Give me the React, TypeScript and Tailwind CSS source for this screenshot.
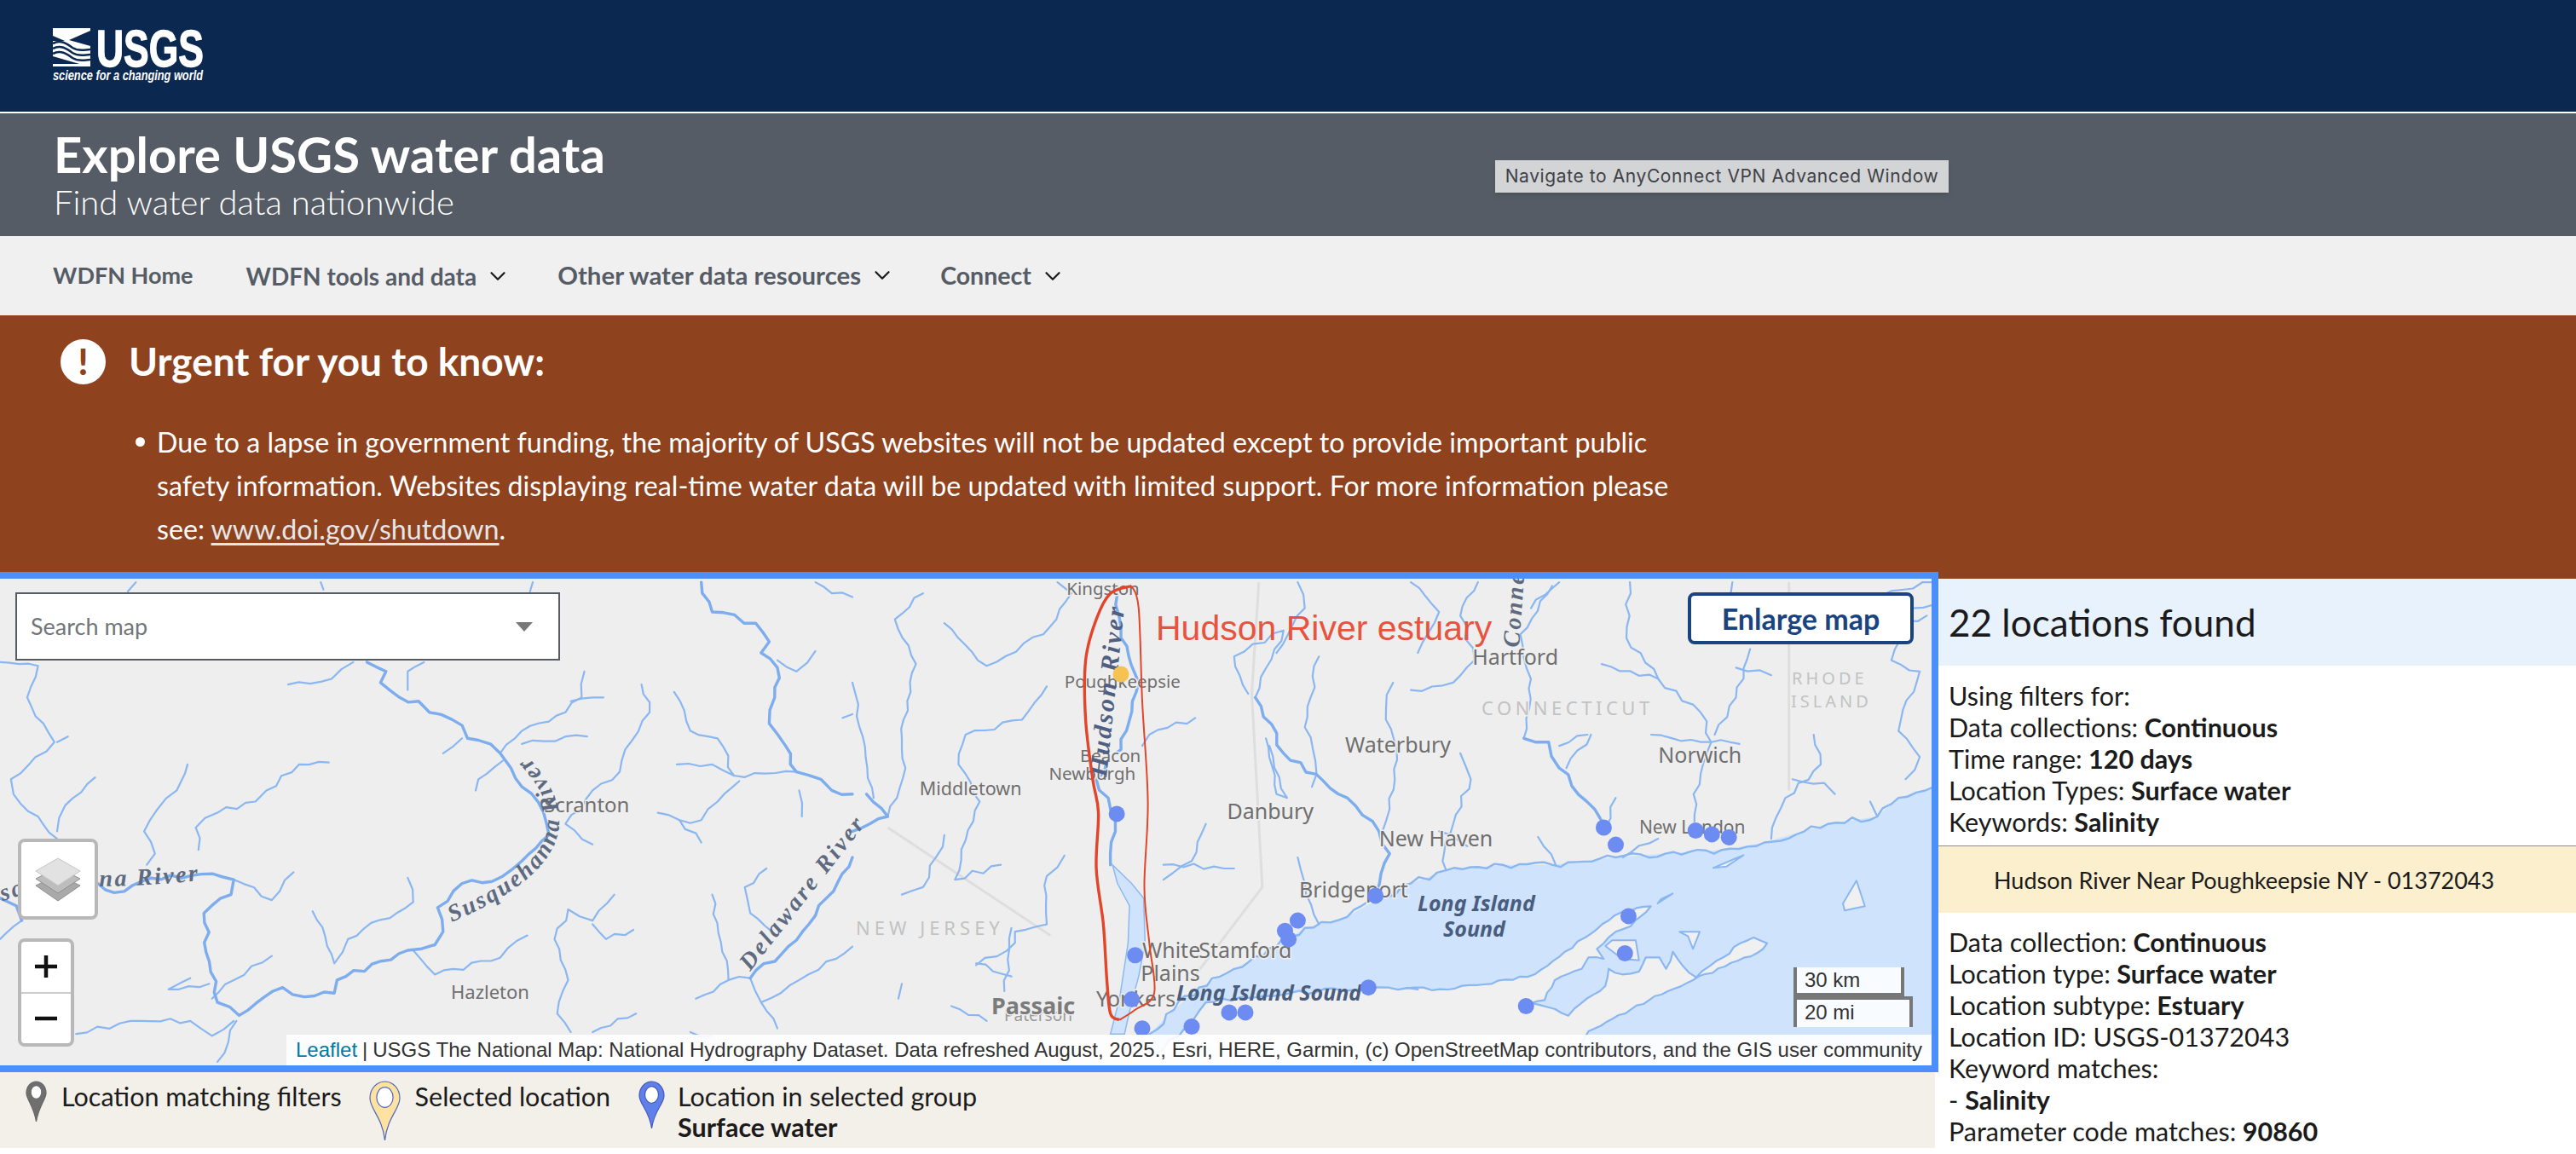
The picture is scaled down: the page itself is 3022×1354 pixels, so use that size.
/**
 * USGS water data explorer, map page with the results side panel.
 * Map geometry is traced from crops, so points are kept in crop coordinates
 * and converted to map pixels by L(), R() and S().
 */
import { ChevronDown } from 'lucide-react';

type Pt = [number, number];

/** Left crop to map pixels. */
const L = ([x, y]: Pt): Pt => [x / 1.568, 670 + y / 2.292];
/** Right crop to map pixels. */
const R = ([x, y]: Pt): Pt => [1000 + x / 1.206, 670 + y / 2.292];
/** Long Island crop to map pixels. */
const S = ([x, y]: Pt): Pt => [1650 + x / 2.529, 1000 + y / 3];

const flat = (n: number[]): Pt[] => {
  const out: Pt[] = [];
  for (let i = 0; i < n.length; i += 2) out.push([n[i], n[i + 1]]);
  return out;
};

const rnd = (i: number) => {
  const v = Math.sin(i * 127.1 + 11.7) * 43758.5453;
  return v - Math.floor(v);
};

/** Turns a few control points into a wiggly river line. */
const wiggle = (pts: Pt[], seed: number, amp = 7, step = 11) => {
  let d = `M${pts[0][0].toFixed(1)} ${pts[0][1].toFixed(1)}`;
  let k = seed * 37;
  for (let i = 1; i < pts.length; i++) {
    const [x0, y0] = pts[i - 1];
    const [x1, y1] = pts[i];
    const len = Math.hypot(x1 - x0, y1 - y0);
    const n = Math.max(1, Math.floor(len / step));
    for (let j = 1; j <= n; j++) {
      const t = j / n;
      const off = j === n ? 0 : (rnd(k++) - 0.5) * amp;
      const x = x0 + (x1 - x0) * t + (-(y1 - y0) / (len || 1)) * off;
      const y = y0 + (y1 - y0) * t + ((x1 - x0) / (len || 1)) * off;
      d += `L${x.toFixed(1)} ${y.toFixed(1)}`;
    }
  }
  return d;
};

const poly = (pts: Pt[]) => pts.map(p => `${p[0].toFixed(1)},${p[1].toFixed(1)}`).join(' ');

const LEFT_THICK = [
  [675,245,710,270,700,300,735,340,770,350,790,380,850,415,860,450,880,455,920,490,940,530,960,580,1000,650,1010,710,960,780,905,835,850,840,805,905,815,970,800,1005,750,1020,620,1100,615,1135,560,1145,520,1120,440,1195,400,1160,385,1050,375,920,425,870,430,830,370,815,260,835,210,865,180,840],
  [1290,30,1310,110,1390,140,1415,190,1400,220,1430,260,1425,340,1415,410,1445,470,1465,540,1510,560,1530,590,1568,600],
  [1380,1095,1450,1010,1520,880,1568,770],
  [0,880,30,900,40,940],
];

const LEFT_THIN = [
  [0,245,70,255,50,340,65,390,100,460,65,500,20,560,25,600,70,660,105,720],
  [175,555,120,630,105,700],
  [105,460,125,445],
  [345,520,325,590,290,640,265,700,285,760,270,790],
  [605,515,550,520,490,590,470,620,400,650,360,690,365,750],
  [435,1210,400,1320],
  [1180,305,1195,380,1150,480,1140,540,1090,590,1040,680,1090,735],
  [920,490,960,430,1040,380,1070,340,1075,270],
  [1050,350,1110,340],
  [960,465,1040,445,1080,445],
  [850,450,815,490],
  [925,510,880,560,875,590],
  [530,305,610,290,650,245],
  [750,320,750,270,780,245],
  [1465,540,1350,550,1310,520,1245,520],
  [1240,325,1270,430,1320,450,1350,550],
  [1430,240,1465,270,1500,215],
  [1360,565,1320,620,1290,670,1250,670,1210,650],
  [1250,670,1290,730],
  [1380,1095,1400,1160,1430,1230],
  [1380,1095,1340,1100,1310,870],
  [1340,1100,1280,1150],
  [1410,800,1370,850,1380,920,1420,970],
  [1400,1160,1470,1100,1520,1050,1568,1010],
  [1130,870,1090,940,1045,910,1020,990,1045,1100,1025,1190,1050,1240],
  [1090,950,1115,990,1165,965],
  [970,980,920,1040,800,1085,760,1020],
  [750,825,760,890,640,990,615,1055,575,915],
  [540,810,500,885,430,830],
  [500,1035,430,1100,390,1150],
  [350,1095,310,1125,385,1110],
  [1170,1190,1090,1240],
  [140,1245,240,1210,350,1210,390,1250,430,1210],
  [40,940,0,990],
  [250,30,235,55],
  [590,30,595,50],
  [980,30,975,55],
  [1500,30,1530,60,1568,70],
  [1568,385,1550,395],
  [1470,590,1475,660],
  [1310,1250,1270,1240],
];

const RIGHT_THICK = [
  [0,700,50,660,20,600],
  [375,60,380,180,405,300,380,480,345,560,365,640,372,700,365,790],
  [570,340,610,490,700,610,745,700,760,760,740,870],
  [950,450,985,460,1000,530,1050,640,1065,690],
];

const RIGHT_THIN = [
  [100,60,60,130,90,250,70,450,75,530,50,660],
  [130,140,190,255,270,170,310,60,290,30],
  [275,310,240,400,160,440,150,520,180,620,145,830,210,790],
  [0,300,10,420,30,610],
  [130,710,100,850,70,870],
  [485,395,420,440,410,470],
  [500,680,480,780,440,830],
  [440,790,540,800],
  [300,765,275,820,275,950,230,970,230,1000,175,1060],
  [570,340,610,160,540,230,560,330],
  [660,230,640,420,655,510,650,580],
  [765,300,755,370,770,480,760,640,750,700],
  [585,450,600,600,615,610,590,470],
  [860,490,875,560,850,680,835,780,840,805],
  [630,770,640,840,660,950],
  [990,40,945,170,960,290,950,450],
  [1045,440,1010,530],
  [1065,690,1080,610],
  [1100,30,1095,180,1140,290,1200,380,1215,460,1190,600,1195,710],
  [1060,250,1140,290],
  [1270,210,1250,340,1220,440],
  [1130,440,1215,460,1255,465],
  [790,320,850,300,880,240,860,120,885,30],
  [1360,440,1370,520,1320,610,1300,720],
  [1440,70,1530,30],
  [1530,90,1500,100,1470,240,1510,270,1480,430,1510,500,1490,560],
  [970,715,995,790],
  [1140,720,1090,770],
  [225,960,215,1130],
  [175,1055,225,1090],
  [70,1110,65,1150],
  [140,1170,190,1210],
  [630,30,640,100,600,220],
  [790,30,830,110,800,220],
  [1250,260,1300,280],
  [1330,560,1375,570,1390,600],
  [1440,620,1450,660],
  [1480,150,1520,120],
  [1040,440,1000,470],
  [830,700,870,740],
  [1000,30,960,100],
  [1245,30,1250,120],
];

const SEA = flat([1530,580,1480,610,1450,660,1380,680,1290,730,1230,750,1150,760,1080,770,990,790,920,790,840,805,790,840,745,880,700,930,640,960,600,1010,540,1070,490,1120,455,1180,420,1245,420,1300,1530,1300]);
const COAST = flat([1530,580,1480,610,1450,660,1380,680,1290,730,1230,750,1150,760,1080,770,990,790,920,790,840,805,790,840,745,880,700,930,640,960,600,1010,540,1070,490,1120,455,1180,420,1245]);
const LONG_ISLAND_WEST = flat([430,1300,470,1230,500,1160,620,1135,730,1120,800,1125]);
const LONG_ISLAND = flat([0,478,100,482,230,465,380,430,470,350,530,300,600,240,640,210,725,190,665,260,620,280,565,340,585,375,540,370,520,410,440,450,410,520,370,530,420,545,480,575,520,530,590,470,600,410,640,430,690,420,710,370,750,370,770,410,790,350,820,400,860,440,900,400,940,370,990,320,1030,300,1070,320,1040,355,850,450,720,520,540,630,500,700]);
const ISLANDS = [
  flat([610,310,680,310,690,380,640,375,590,330]),
  flat([810,280,870,280,850,340,835,295]),
  flat([1335,100,1360,190,1300,205,1295,180]),
  flat([745,180,790,145,755,165]),
  flat([910,55,1000,10,950,50]),
];
const HUDSON = flat([368,790,395,840,412,880,414,1000,405,1090,395,1160,385,1245,365,1245,378,1150,390,1000,392,900,375,840]);

const BLUE_DOTS = flat([374,653,400,1033,395,1152,410,1230,480,1225,533,1187,556,1187,730,1120,953,1170,1098,928,1093,1028,1063,690,1080,736,1193,698,1216,708,1240,716,740,873,630,940,612,968,617,990]);

const RED_LEFT = flat([395,40,365,60,345,130,330,240,330,400,340,560,348,650,345,800,355,950,360,1100,365,1190,378,1207]);
const RED_RIGHT = flat([378,1207,400,1180,427,1135,420,1000,413,850,418,620,410,350,405,100,395,40]);

const smooth = (pts: Pt[]) => {
  let d = `M${pts[0][0].toFixed(1)} ${pts[0][1].toFixed(1)}`;
  for (let i = 0; i < pts.length - 1; i++) {
    const p0 = pts[Math.max(0, i - 1)];
    const p1 = pts[i];
    const p2 = pts[i + 1];
    const p3 = pts[Math.min(pts.length - 1, i + 2)];
    d += `C${(p1[0] + (p2[0] - p0[0]) / 6).toFixed(1)} ${(p1[1] + (p2[1] - p0[1]) / 6).toFixed(1)} ${(p2[0] - (p3[0] - p1[0]) / 6).toFixed(1)} ${(p2[1] - (p3[1] - p1[1]) / 6).toFixed(1)} ${p2[0].toFixed(1)} ${p2[1].toFixed(1)}`;
  }
  return d;
};

/** City labels, [text, left, baseline, size] in right crop coordinates. */
const CITIES: [string, number, number, number][] = [
  ['Kingston', 303, 65, 20.5],
  ['Poughkeepsie', 300, 315, 20.5],
  ['Hartford', 877, 253, 25],
  ['Waterbury', 697, 488, 25],
  ['Norwich', 1140, 515, 25],
  ['Danbury', 530, 668, 25],
  ['Beacon', 322, 513, 20.5],
  ['Newburgh', 278, 562, 20.5],
  ['Middletown', 95, 602, 21.5],
  ['New Haven', 745, 740, 25],
  ['New London', 1113, 705, 21],
  ['Bridgeport', 632, 878, 25],
  ['White', 410, 1040, 25],
  ['Stamford', 490, 1040, 25],
  ['Plains', 408, 1103, 25],
  ['Yonkers', 345, 1172, 25],
];

const MapArt = () => {
  const cityColor = '#6f6f6f';
  const serif = "'Liberation Serif', serif";
  const sans = "'Noto Sans', sans-serif";
  return (
    <svg className="absolute inset-0 h-full w-full" viewBox="0 679 2266 571">
      <rect x="0" y="679" width="2266" height="571" fill="#eeeeee" />
      {/* state lines */}
      <g fill="none" stroke="#dedede" strokeWidth="3">
        <polyline points={poly(flat([575,30,565,330,580,850,480,1100]).map(R))} />
        <polyline points={poly(flat([1325,30,1325,590]).map(R))} />
        <polyline points={poly(flat([50,690,280,980]).map(R))} />
      </g>
      <polygon points={poly(SEA.map(R))} fill="#cfe3fd" />
      <polygon points={poly(LONG_ISLAND_WEST.map(R).concat(LONG_ISLAND.map(S)))} fill="#f0f0f0" />
      <g fill="none" strokeLinejoin="round" strokeLinecap="round">
        <path d={wiggle(COAST.map(R), 200, 8, 9)} stroke="#8ab7f1" strokeWidth="2.4" />
        <path d={wiggle(LONG_ISLAND_WEST.map(R), 201, 5, 10)} stroke="#8ab7f1" strokeWidth="2.4" />
        <path d={wiggle(LONG_ISLAND.map(S), 202, 3, 8)} stroke="#8ab7f1" strokeWidth="2.2" />
      </g>
      {ISLANDS.map((pts, i) => (
        <polygon key={i} points={poly(pts.map(S))} fill="#f0f0f0" stroke="#8ab7f1" strokeWidth="2" strokeLinejoin="round" />
      ))}
      <polygon points={poly(HUDSON.map(R))} fill="#cfe3fd" stroke="#8db9f1" strokeWidth="1.5" />
      <g fill="none" strokeLinejoin="round" strokeLinecap="round">
        {LEFT_THIN.map((r, i) => (
          <path key={`lt${i}`} d={wiggle(flat(r).map(L), i + 1)} stroke="#8ab7f1" strokeWidth="2.2" />
        ))}
        {RIGHT_THIN.map((r, i) => (
          <path key={`rt${i}`} d={wiggle(flat(r).map(R), i + 50)} stroke="#8ab7f1" strokeWidth="2.2" />
        ))}
        {LEFT_THICK.map((r, i) => (
          <path key={`lb${i}`} d={wiggle(flat(r).map(L), i + 90)} stroke="#7dadee" strokeWidth="3.4" />
        ))}
        {RIGHT_THICK.map((r, i) => (
          <path key={`rb${i}`} d={wiggle(flat(r).map(R), i + 120)} stroke="#7dadee" strokeWidth="3.4" />
        ))}
      </g>

      {/* place names */}
      <g fontFamily={sans} fill={cityColor} stroke="#eeeeee" strokeWidth="3" paintOrder="stroke">
        {CITIES.map(([t, x, y, s]) => {
          const [px, py] = R([x, y]);
          return (
            <text key={t} x={px} y={py} fontSize={s}>
              {t}
            </text>
          );
        })}
        <text x="638" y="953" fontSize="24">Scranton</text>
        <text x="529" y="1172" fontSize="22">Hazleton</text>
        <text x="1738" y="839" fontSize="22" letterSpacing="4.5" fill="#c2c2c2">CONNECTICUT</text>
        <text x="2102" y="803" fontSize="20" letterSpacing="4" fill="#c2c2c2">RHODE</text>
        <text x="2101" y="830" fontSize="20" letterSpacing="4" fill="#c2c2c2">ISLAND</text>
        <text x="1004" y="1097" fontSize="22" letterSpacing="5" fill="#c2c2c2">NEW JERSEY</text>
        <text x="1178" y="1198" fontSize="19" fill="#9a9a9a">Paterson</text>
        <text x="1163" y="1190" fontSize="27" fontWeight="700" fill="#7b7b7b">Passaic</text>
      </g>
      <g fontFamily={sans} fontStyle="italic" fontWeight="700" fontSize="25" fill="#4a5d7d">
        <text x="1663" y="1069">Long Island</text>
        <text x="1693" y="1099">Sound</text>
        <text x="1380" y="1174">Long Island Sound</text>
      </g>
      <defs>
        <path id="susq" d="M530 1082 C590 1056 652 1020 656 968 C658 930 632 900 604 872" />
        <path id="susq2" d="M-30 1072 Q30 1040 110 1040 T285 1027" />
      </defs>
      <g fontFamily={serif} fontStyle="italic" fontWeight="700" fontSize="28" letterSpacing="2.5" fill="#5d6a80">
        <text><textPath href="#susq">Susquehanna River</textPath></text>
        <text><textPath href="#susq2">Susquehanna River</textPath></text>
        <text transform="translate(880 1140) rotate(-52)" letterSpacing="3">Delaware River</text>
        <text transform="translate(1298 912) rotate(-84)" fill="#4f5f82" letterSpacing="2.5" fontSize="30">Hudson River</text>
        <text transform="translate(1782 760) rotate(-86)">Connecticut River</text>
      </g>

      {BLUE_DOTS.map(R).map(([x, y], i) => (
        <circle key={i} cx={x} cy={y} r="9.5" fill="#6d8cf2" />
      ))}
      <circle cx={1315} cy={791} r="9.5" fill="#f6c251" />

      <path d={smooth(RED_LEFT.map(R))} fill="none" stroke="#e2452a" strokeWidth="3.4" />
      <path d={smooth(RED_RIGHT.map(R))} fill="none" stroke="#e2452a" strokeWidth="2" />
      <text x="1356" y="751" fontFamily="'Liberation Sans', sans-serif" fontSize="41" fill="#e8533f">
        Hudson River estuary
      </text>
    </svg>
  );
};

const UsgsLogo = () => (
  <svg width="182" height="72" viewBox="0 0 182 72" className="block">
    <rect x="1" y="3" width="44" height="45" fill="#ffffff" />
    <path d="M45 6 L45 24 L20 17 Z" fill="#0a2850" />
    <path d="M1 12 L1 18 L15 18 Z" fill="#0a2850" />
    <path d="M1 36 L1 45 L32 45 Z" fill="#0a2850" />
    <g fill="none" stroke="#0a2850" strokeWidth="2.6">
      <path d="M1 21 C10 16 17 21 24 26 C32 31 39 28 45 28" />
      <path d="M1 27 C10 22 17 27 24 32 C32 37 39 34 45 34" />
      <path d="M1 33 C10 28 17 33 24 38 C32 43 39 40 45 40" />
    </g>
    <text x="52" y="48" fontFamily="'Liberation Sans', sans-serif" fontWeight="700" fontSize="62" fill="#ffffff" stroke="#ffffff" strokeWidth="1.4" textLength="126" lengthAdjust="spacingAndGlyphs">
      USGS
    </text>
    <text x="1" y="64" fontFamily="'Liberation Sans', sans-serif" fontStyle="italic" fontWeight="700" fontSize="16.5" fill="#ffffff" textLength="176" lengthAdjust="spacingAndGlyphs">
      science for a changing world
    </text>
  </svg>
);

/** Teardrop marker used in the legend. */
const Pin = ({ w, h, fill, stroke, ring }: { w: number; h: number; fill: string; stroke: string; ring: string }) => {
  const r = w / 2 - 1;
  return (
    <svg width={w} height={h} viewBox={`0 0 ${w} ${h}`} className="shrink-0">
      <path
        d={`M${w / 2} ${h - 1} C${w / 2 - 3} ${h * 0.6} 1 ${r * 1.9} 1 ${r + 3} A${r} ${r + 2} 0 0 1 ${w - 1} ${r + 3} C${w - 1} ${r * 1.9} ${w / 2 + 3} ${h * 0.6} ${w / 2} ${h - 1} Z`}
        fill={fill}
        stroke={stroke}
        strokeWidth="1.2"
      />
      <ellipse cx={w / 2} cy={r + 2} rx={r * 0.55} ry={r * 0.68} fill="#ffffff" stroke={ring} strokeWidth="1.2" />
    </svg>
  );
};

const NavItem = ({ label, className }: { label: string; className: string }) => (
  <span className={`flex items-center gap-[10px] whitespace-nowrap ${className}`}>
    {label}
    <ChevronDown className="size-[30px] text-[#1b1b1b]" strokeWidth={1.8} />
  </span>
);

const Line = ({ label, value }: { label: string; value?: string }) => (
  <div className="whitespace-nowrap">
    {label}
    {value && <b className="font-bold"> {value}</b>}
  </div>
);

export default function App() {
  return (
    <div className="relative h-[1354px] w-[3022px] overflow-hidden bg-white font-['Lato',sans-serif] text-[#1b1b1b]">
      {/* USGS bar */}
      <header className="box-border h-[133px] border-b-2 border-white bg-[#0a2850] pl-[61px] pt-[30px]">
        <UsgsLogo />
      </header>

      {/* App title */}
      <div className="relative box-border h-[144px] bg-[#565c65] pl-[63px] pt-[17px] text-white">
        <h1 className="text-[58px] font-bold leading-[62px] whitespace-nowrap">Explore USGS water data</h1>
        <p className="text-[40px] font-light leading-[50px] whitespace-nowrap">Find water data nationwide</p>
        <div className="absolute left-[1754px] top-[55px] flex h-[38px] w-[532px] items-center justify-center bg-[#d2d4d6] font-['Inter',sans-serif] text-[21px] tracking-[0.6px] whitespace-nowrap text-[#3f4146] shadow-md">
          Navigate to AnyConnect VPN Advanced Window
        </div>
      </div>

      {/* Site nav */}
      <nav className="flex h-[93px] items-center bg-[#f0f0f0] pl-[62px] font-bold text-[#565c65]">
        <span className="whitespace-nowrap text-[27px]">WDFN Home</span>
        <NavItem label="WDFN tools and data" className="ml-[62px] text-[28px]" />
        <NavItem label="Other water data resources" className="ml-[55px] text-[29.4px]" />
        <NavItem label="Connect" className="ml-[53px] text-[28.5px]" />
      </nav>

      {/* Alert */}
      <section className="box-border h-[309px] bg-[#8f421e] pl-[71px] pt-[27px] text-white">
        <div className="flex items-center gap-[27px]">
          <div className="flex size-[53px] items-center justify-center rounded-full bg-white text-[42px] font-black leading-none text-[#8f421e]">
            !
          </div>
          <h2 className="text-[46px] font-bold leading-[54px] whitespace-nowrap">Urgent for you to know:</h2>
        </div>
        <ul className="mt-[42px] list-none pl-[113px] text-[32.2px] leading-[51px]">
          <li className="relative whitespace-nowrap">
            <span className="absolute left-[-25px] top-[20px] size-[11px] rounded-full bg-white" />
            Due to a lapse in government funding, the majority of USGS websites will not be updated except to provide important public
            <br />
            safety information. Websites displaying real-time water data will be updated with limited support. For more information please
            <br />
            see: <a className="text-[#e6e6e6] underline underline-offset-4">www.doi.gov/shutdown</a>.
          </li>
        </ul>
      </section>

      <main className="flex">
        <div className="w-[2270px] shrink-0">
          {/* Map */}
          <div className="relative z-10 h-[571px] w-[2266px] overflow-hidden outline-8 outline-[#4a8ffa]">
            <MapArt />

            <div className="absolute left-[18px] top-[16px] box-border flex h-[80px] w-[639px] items-center justify-between border-2 border-[#565c65] bg-white pl-[16px] pr-[30px] text-[27px] text-[#71767a]">
              Search map
              <span className="h-0 w-0 border-x-[10px] border-t-[11px] border-x-transparent border-t-[#777777]" />
            </div>

            <button className="absolute left-[1980px] top-[16px] box-border h-[61px] w-[265px] rounded-lg border-4 border-[#1a4480] bg-white text-[34px] font-bold text-[#1a4480]">
              Enlarge map
            </button>

            <div className="absolute left-[21px] top-[305px] box-border flex h-[95px] w-[94px] items-center justify-center rounded-lg border-4 border-[#b8b8b8] bg-white">
              <svg width="54" height="52" viewBox="0 0 54 52">
                <path d="M27 20 L53 33 L27 51 L1 33 Z" fill="#a9a9a9" stroke="#8f8f8f" />
                <path d="M27 12 L53 25 L27 42 L1 25 Z" fill="#bdbdbd" stroke="#8f8f8f" />
                <path d="M27 1 L53 16 L27 33 L1 16 Z" fill="#e2e2e2" stroke="#c4c4c4" />
              </svg>
            </div>

            <div className="absolute left-[21px] top-[422px] box-border flex h-[127px] w-[66px] flex-col rounded-lg border-4 border-[#b8b8b8] bg-white text-[#111111]">
              <div className="flex flex-1 items-center justify-center border-b-2 border-[#cccccc]">
                <svg width="26" height="26" viewBox="0 0 26 26"><path d="M13 0v26M0 13h26" stroke="currentColor" strokeWidth="4.5" /></svg>
              </div>
              <div className="flex flex-1 items-center justify-center">
                <svg width="26" height="6" viewBox="0 0 26 6"><path d="M0 3h26" stroke="currentColor" strokeWidth="4.5" /></svg>
              </div>
            </div>

            <div className="absolute left-[2104px] top-[456px] font-['Liberation_Sans',sans-serif] text-[24px] leading-[30px] text-[#333333]">
              <div className="box-border h-[34px] w-[130px] border-x-4 border-b-4 border-[#777777] bg-white/85 pl-[9px]">30 km</div>
              <div className="box-border h-[36px] w-[140px] border-x-4 border-t-4 border-[#777777] bg-white/85 pl-[9px]">20 mi</div>
            </div>

            <div className="absolute bottom-0 right-0 flex h-[36px] items-center bg-white/90 pl-[11px] pr-[11px] font-['Liberation_Sans',sans-serif] text-[24px] whitespace-nowrap text-[#333333]">
              <a className="text-[#0078a8]">Leaflet</a>
              <span className="mx-[6px]">|</span>
              USGS The National Map: National Hydrography Dataset. Data refreshed August, 2025., Esri, HERE, Garmin, (c) OpenStreetMap contributors, and the GIS user community
            </div>
          </div>

          {/* Legend */}
          <div className="mt-[8px] flex h-[89px] bg-[#f3efe9] pl-[30px] pt-[10px] text-[30.5px] leading-[36px]">
            <Pin w={25} h={49} fill="#6f6f6f" stroke="#666666" ring="#6f6f6f" />
            <span className="ml-[17px] whitespace-nowrap">Location matching filters</span>
            <div className="ml-[32px]">
              <Pin w={37} h={71} fill="#fde2a0" stroke="#5265c4" ring="#5265c4" />
            </div>
            <span className="ml-[17px] whitespace-nowrap">Selected location</span>
            <div className="ml-[33px]">
              <Pin w={31} h={57} fill="#5f80e8" stroke="#4358c0" ring="#4358c0" />
            </div>
            <div className="ml-[15px] whitespace-nowrap">
              Location in selected group
              <br />
              <b className="font-bold">Surface water</b>
            </div>
          </div>
        </div>

        {/* Results panel */}
        <aside className="min-w-0 flex-1 text-[30.5px] leading-[37px]">
          <div className="flex h-[102px] items-center bg-[#e7f2fd] pl-[16px] text-[44px] whitespace-nowrap">22 locations found</div>
          <div className="box-border h-[211px] pl-[16px] pt-[17px]">
            <Line label="Using filters for:" />
            <Line label="Data collections:" value="Continuous" />
            <Line label="Time range:" value="120 days" />
            <Line label="Location Types:" value="Surface water" />
            <Line label="Keywords:" value="Salinity" />
          </div>
          <div className="box-border flex h-[79px] items-center border-t border-[#8d8d8d] bg-[#fcefcd] pl-[69px] text-[27px] whitespace-nowrap">
            Hudson River Near Poughkeepsie NY - 01372043
          </div>
          <div className="pl-[16px] pt-[16px]">
            <Line label="Data collection:" value="Continuous" />
            <Line label="Location type:" value="Surface water" />
            <Line label="Location subtype:" value="Estuary" />
            <Line label="Location ID: USGS-01372043" />
            <Line label="Keyword matches:" />
            <div className="whitespace-nowrap">- <b className="font-bold">Salinity</b></div>
            <Line label="Parameter code matches:" value="90860" />
          </div>
        </aside>
      </main>
    </div>
  );
}
